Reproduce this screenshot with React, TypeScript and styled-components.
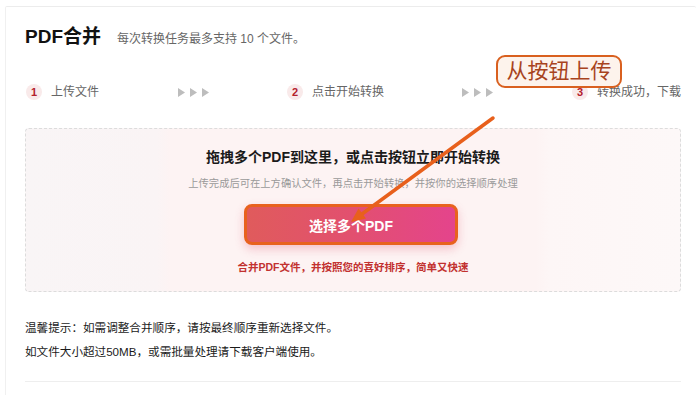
import React from "react";
import styled, { createGlobalStyle } from "styled-components";

const Global = createGlobalStyle`
  html, body { margin: 0; padding: 0; background: #ffffff; }
  body { font-family: "Liberation Sans", "Noto Sans CJK SC", sans-serif; color: #222; }
  * { box-sizing: border-box; }
`;

const Page = styled.div`
  position: relative;
  width: 700px;
  height: 395px;
  overflow: hidden;
  padding: 6px 4px 0 5px;
`;

const Card = styled.div`
  border-top: 1px solid #ececec;
  border-left: 1px solid #f0f0f0;
  border-radius: 2px 2px 0 0;
  padding: 18px 15px 0 19px;
  height: 100%;
`;

const Header = styled.div`
  display: flex;
  align-items: baseline;
  gap: 16px;
`;

const Title = styled.h1`
  margin: 0;
  font-size: 19px;
  line-height: 24px;
  font-weight: 700;
  color: #111;
`;

const Sub = styled.span`
  font-size: 12px;
  line-height: 24px;
  color: #666;
`;

const Steps = styled.div`
  margin-top: 33px;
  display: flex;
  justify-content: space-between;
  align-items: center;
  height: 16px;
  padding-left: 1px;
`;

const Step = styled.div`
  display: flex;
  align-items: center;
  gap: 9px;
`;

const StepNum = styled.span`
  width: 16px;
  height: 16px;
  border-radius: 50%;
  background: #f9eaea;
  color: #b3202c;
  font-size: 11px;
  font-weight: 700;
  display: flex;
  align-items: center;
  justify-content: center;
`;

const StepLabel = styled.span`
  font-size: 12px;
  line-height: 16px;
  color: #666;
`;

const Arrows = styled.div`
  display: flex;
  gap: 5px;
  align-items: center;
`;

const Drop = styled.div`
  margin-top: 28px;
  height: 164px;
  border: 1px dashed #dcdcdc;
  border-radius: 4px;
  background: linear-gradient(90deg, #f9f5f6 0%, #faf4f5 20%, #fdf3f3 22%, #fdf3f3 78%, #fdf6f6 80%, #fdf8f8 100%);
  display: flex;
  flex-direction: column;
  align-items: center;
  padding-top: 18px;
`;

const DropTitle = styled.div`
  font-size: 14px;
  line-height: 20px;
  font-weight: 700;
  color: #1a1a1a;
`;

const DropSub = styled.div`
  margin-top: 9px;
  font-size: 10.3px;
  line-height: 16px;
  color: #9a9a9a;
`;

const SelectButton = styled.button`
  margin-top: 12px;
  margin-right: 4px;
  width: 214px;
  height: 41px;
  border: 3px solid #e8621e;
  border-radius: 8px;
  background: linear-gradient(90deg, #e05b5c 0%, #e2506f 50%, #e4448c 100%);
  box-shadow: 0 4px 10px rgba(226, 80, 110, 0.3);
  color: #ffffff;
  font-family: "Liberation Sans", "Noto Sans CJK SC", sans-serif;
  font-size: 14px;
  font-weight: 700;
  cursor: pointer;
  padding: 0;
`;

const DropNote = styled.div`
  margin-top: 14px;
  font-size: 10.5px;
  line-height: 16px;
  font-weight: 700;
  color: #c2312f;
`;

const Tips = styled.div`
  margin-top: 24px;
  font-size: 11.6px;
  line-height: 24px;
  color: #1a1a1a;
`;

const Divider = styled.div`
  margin-top: 17px;
  height: 1px;
  background: #eeeeee;
`;

const Callout = styled.div`
  position: absolute;
  left: 496px;
  top: 55px;
  width: 126px;
  height: 33px;
  border: 2px solid #d9601f;
  border-radius: 9px;
  background: #fdf3ec;
  color: #a8431e;
  font-size: 21px;
  line-height: 28px;
  text-align: center;
`;

const Overlay = styled.svg`
  position: absolute;
  left: 0;
  top: 0;
  width: 700px;
  height: 395px;
  pointer-events: none;
`;

const Tri = () => (
  <svg width="7" height="9" viewBox="0 0 7 9">
    <polygon points="0,0 7,4.5 0,9" fill="#bdbdbd" />
  </svg>
);

const ArrowGroup = () => (
  <Arrows>
    <Tri />
    <Tri />
    <Tri />
  </Arrows>
);

export default function App() {
  return (
    <>
      <Global />
      <Page>
        <Card>
          <Header>
            <Title>PDF合并</Title>
            <Sub>每次转换任务最多支持 10 个文件。</Sub>
          </Header>
          <Steps>
            <Step>
              <StepNum>1</StepNum>
              <StepLabel>上传文件</StepLabel>
            </Step>
            <ArrowGroup />
            <Step>
              <StepNum>2</StepNum>
              <StepLabel>点击开始转换</StepLabel>
            </Step>
            <ArrowGroup />
            <Step>
              <StepNum>3</StepNum>
              <StepLabel>转换成功，下载</StepLabel>
            </Step>
          </Steps>
          <Drop>
            <DropTitle>拖拽多个PDF到这里，或点击按钮立即开始转换</DropTitle>
            <DropSub>上传完成后可在上方确认文件，再点击开始转换，并按你的选择顺序处理</DropSub>
            <SelectButton>选择多个PDF</SelectButton>
            <DropNote>合并PDF文件，并按照您的喜好排序，简单又快速</DropNote>
          </Drop>
          <Tips>
            <div>温馨提示：如需调整合并顺序，请按最终顺序重新选择文件。</div>
            <div>如文件大小超过50MB，或需批量处理请下载客户端使用。</div>
          </Tips>
          <Divider />
        </Card>
        <Overlay viewBox="0 0 700 395">
          <line x1="493" y1="118" x2="362" y2="214" stroke="#e8601c" strokeWidth="3.5" strokeLinecap="round" />
          <polygon points="351,222 366,218.5 358.5,208.5" fill="#e8601c" />
        </Overlay>
        <Callout>从按钮上传</Callout>
      </Page>
    </>
  );
}
